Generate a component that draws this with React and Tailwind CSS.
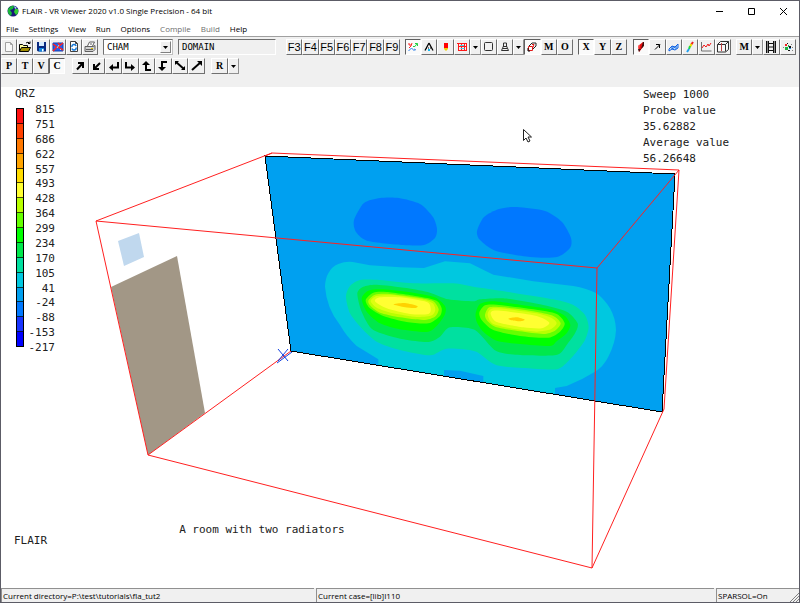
import React, { useState } from 'react';
import clsx from 'clsx';

const MENU = [
  { label: 'File' },
  { label: 'Settings' },
  { label: 'View' },
  { label: 'Run' },
  { label: 'Options' },
  { label: 'Compile', disabled: true },
  { label: 'Build', disabled: true },
  { label: 'Help' },
];

const LEGEND_LABELS = [815, 751, 686, 622, 557, 493, 428, 364, 299, 234, 170, 105, 41, -24, -88, -153, -217];

const LEGEND_COLORS = [
  '#ff1010', '#ff4000', '#ff7800', '#ffa400', '#ffdc00', '#ffff32', '#b8ff00', '#64ff00',
  '#00ff00', '#00e84c', '#00e0a0', '#00c8e0', '#00a0f0', '#0078ff', '#1834ff', '#0000ff',
];

// Contour rings on the result plane, outermost first
const RINGS = [
  {
    color: '#00e0a0',
    points: [[78, 170], [90, 138], [120, 120], [180, 120], [280, 130], [400, 130], [460, 140], [560, 155], [700, 178], [760, 195], [795, 225], [806, 262], [795, 300], [770, 335], [740, 368], [710, 388], [640, 386], [530, 376], [465, 334], [380, 326], [330, 346], [240, 330], [170, 305], [125, 265], [90, 220]],
  },
  {
    color: '#00e84c',
    points: [[112, 160], [130, 140], [170, 134], [260, 144], [330, 158], [385, 178], [460, 184], [480, 178], [550, 175], [660, 193], [740, 215], [773, 250], [765, 280], [740, 315], [712, 344], [620, 346], [530, 334], [465, 270], [390, 262], [360, 290], [325, 306], [250, 298], [160, 270], [125, 215]],
  },
  { color: '#00ff00', points: [[125, 175], [145, 152], [190, 148], [280, 158], [345, 172], [376, 200], [374, 225], [350, 258], [320, 276], [240, 268], [180, 250], [140, 215]] },
  { color: '#00ff00', points: [[467, 220], [480, 192], [520, 184], [600, 194], [690, 208], [735, 228], [751, 255], [740, 280], [710, 304], [690, 318], [600, 312], [530, 302], [490, 275], [470, 245]] },
  { color: '#64ff00', points: [[137, 180], [160, 158], [200, 156], [300, 170], [350, 182], [365, 205], [360, 228], [325, 250], [260, 246], [190, 228], [150, 205]] },
  { color: '#64ff00', points: [[478, 218], [495, 196], [530, 194], [640, 208], [710, 222], [734, 250], [720, 275], [685, 293], [600, 288], [520, 270], [485, 240]] },
  { color: '#b8ff00', points: [[145, 182], [165, 164], [210, 162], [300, 174], [340, 184], [356, 208], [345, 230], [310, 240], [240, 232], [180, 218], [152, 198]] },
  { color: '#b8ff00', points: [[495, 225], [508, 202], [550, 202], [640, 214], [700, 228], [722, 250], [705, 272], [670, 282], [600, 274], [530, 262], [502, 242]] },
  { color: '#dcff10', points: [[152, 183], [170, 168], [220, 166], [310, 179], [338, 190], [346, 208], [336, 226], [290, 231], [220, 220], [170, 203]] },
  { color: '#dcff10', points: [[503, 224], [515, 206], [560, 207], [650, 220], [695, 234], [710, 250], [692, 268], [650, 275], [590, 268], [520, 252]] },
  { color: '#ffff32', points: [[165, 184], [180, 172], [240, 172], [320, 186], [332, 205], [325, 222], [270, 222], [200, 205]] },
  { color: '#ffff32', points: [[512, 222], [520, 212], [560, 214], [650, 228], [688, 248], [665, 265], [610, 262], [530, 246]] },
  { color: '#ffd200', points: [[220, 193], [255, 189], [292, 198], [285, 204], [255, 202]] },
  { color: '#ffd200', points: [[565, 236], [590, 232], [614, 239], [600, 244], [575, 241]] },
];

const COLD_SPOTS = [
  [[354, 220], [364, 203], [380, 198], [399, 198], [420, 204], [433, 217], [437, 229], [435, 238], [424, 245], [403, 245], [368, 241], [356, 232]],
  [[477, 231], [484, 217], [499, 209], [517, 207], [545, 211], [562, 222], [571, 238], [570, 248], [557, 257], [530, 257], [496, 251], [480, 240]],
];

// Closed Catmull-Rom curve through the points
const smooth = (pts) => {
  const n = pts.length;
  const at = (i) => pts[(i + n) % n];
  let d = `M${pts[0]}`;
  for (let i = 0; i < n; i++) {
    const [p0, p1, p2, p3] = [at(i - 1), at(i), at(i + 1), at(i + 2)];
    const c1 = [p1[0] + (p2[0] - p0[0]) / 8, p1[1] + (p2[1] - p0[1]) / 8];
    const c2 = [p2[0] - (p3[0] - p1[0]) / 8, p2[1] - (p3[1] - p1[1]) / 8];
    d += `C${c1} ${c2} ${p2}`;
  }
  return d + 'Z';
};

function Icon({ children, ...props }) {
  return (
    <svg viewBox="0 0 14 14" className="h-3.5 w-3.5 shrink-0" fill="none" stroke="black" aria-hidden="true" {...props}>
      {children}
    </svg>
  );
}

const ICONS = {
  new: (
    <Icon stroke="#a0a0a0"><path d="M3.5 2.5h5l2 2v7h-7zM8.5 2.5v2h2" fill="#f8f8f8" /></Icon>
  ),
  open: (
    <Icon>
      <path d="M1.5 11.5v-7h3l1 1h4v2" fill="#ffffa0" />
      <path d="M1.5 11.5l2-4h9l-2 4z" fill="#a08c00" />
      <path d="M8 3q2-2 4 .5M12 1.500v2h-2" />
    </Icon>
  ),
  save: (
    <Icon stroke="none">
      <path d="M3 2h9v9.500H4l-1-1z" fill="#0a2a80" />
      <path d="M5 2h5v4H5z" fill="#d8ecff" />
      <path d="M5 8h5v3.500H5z" fill="#1488e0" />
      <path d="M8 9h1.500v2.500H8z" fill="white" />
    </Icon>
  ),
  mail: (
    <Icon>
      <path d="M2 3h10v8H2z" fill="#2060f0" stroke="#1040b0" />
      <path d="M2 4l4 3-4 4M12 3L7 7l5 3M7 3l2 2" stroke="#ff2020" strokeWidth="1.5" />
      <path d="M6 8l2-3M9 10l1-1" stroke="#80e0ff" />
    </Icon>
  ),
  refresh: (
    <Icon>
      <path d="M3.500 1.500h5l2 2v8h-7z" fill="white" stroke="#404040" />
      <path d="M8.500 1.500v2h2" stroke="#404040" />
      <path d="M5 7a2 2 0 0 1 4-1M9 7.500a2 2 0 0 1-4 1" stroke="#1478d8" strokeWidth="1.500" />
    </Icon>
  ),
  print: (
    <Icon stroke="#606060">
      <path d="M4.500 6l2-4h5l-2 4" fill="white" />
      <path d="M2 6.500h8l2-1v4l-2 2H2z" fill="#d0d0d0" />
      <path d="M3 9.500h7M7 4h2" />
      <path d="M8 8.500h2" stroke="#d8c000" />
    </Icon>
  ),
  axes: (
    <Icon>
      <path d="M3 3v2h2M6 3l-1 3-2 2" stroke="#ff2020" />
      <path d="M7 6.500h2l2-3M9 3.500h2.500v2.500" stroke="#20d040" />
      <path d="M2.500 11l3-3 3 3M8 9l2 1" stroke="#3080e8" />
    </Icon>
  ),
  view: (
    <Icon>
      <path d="M7 3L3 10.500M7 3l4 7.500" strokeWidth="1.300" />
      <path d="M4 8h6" strokeDasharray="1 1" />
      <path d="M6 10h2" stroke="#10b8f0" strokeWidth="2" />
    </Icon>
  ),
  probe: (
    <Icon stroke="none">
      <path d="M5 3h4v5H5z" fill="#ff0000" />
      <path d="M5 8h4v1l-2 2-2-2z" fill="#f0d000" />
    </Icon>
  ),
  mesh: (
    <Icon stroke="#ff1818">
      <path d="M2 3.500h9M3.500 3v8M11.500 3v8M3 10.500h9" />
      <path d="M6.500 3v8M9.500 4v7M3 6.500h9" />
      <path d="M5 5.500h4M5.500 8.500h4" stroke="#40d0e8" />
    </Icon>
  ),
  box: (
    <Icon stroke="#303030"><rect x="2.500" y="2.500" width="8" height="8" rx="1" /></Icon>
  ),
  wire: (
    <Icon stroke="#303030"><path d="M5.500 3v3l-2 4.500h7l-2-4.500V3zM5 6.500h4M5 8.500h4" /></Icon>
  ),
  object: (
    <Icon>
      <path d="M4 6l3-3h4v3L8 9" stroke="#202020" />
      <path d="M3.500 6.500h4v4h-4zM7 4.500h2l-1 3" stroke="#e01818" />
      <path d="M3 8v3h2" />
    </Icon>
  ),
  contour: (
    <Icon stroke="none">
      <path d="M4 6l5-4v5l-4 5z" fill="#e81010" />
      <path d="M9 2l1 0v4l-3 3zM4 9l1 3 2-3z" fill="#401010" />
      <path d="M4 6l2-1-1 4z" fill="#ff6060" />
    </Icon>
  ),
  vector: (
    <Icon><path d="M5 9.500l5-5M6 4.500h3.500V8" /></Icon>
  ),
  surface: (
    <Icon stroke="#1060e0">
      <path d="M2 9l3-3 3 1 3-3v4l-3 2-3-1-3 2z" fill="#c8e8ff" />
      <path d="M5 6v3M8 7l-3 2M9 6v3" />
    </Icon>
  ),
  stream: (
    <Icon strokeWidth="2">
      <path d="M10 2L8 5" stroke="#f02020" />
      <path d="M8.500 4L7 7" stroke="#f0e000" />
      <path d="M7 6L6 9" stroke="#20d840" />
      <path d="M6 9l-2 3" stroke="#20a0f0" />
    </Icon>
  ),
  chart: (
    <Icon>
      <path d="M2.500 2v9h10" stroke="#707070" />
      <path d="M3 8l2-3 2 2 2-3 1 2 2-3" stroke="#f01818" />
    </Icon>
  ),
  cube: (
    <Icon stroke="#303030">
      <path d="M1.500 4.500l3-3h8v8l-3 2.500h-8zM1.500 4.500h8l3-3M9.500 4.500v7" fill="#f8f8f8" />
      <path d="M5.500 3v8" stroke="#c04040" />
    </Icon>
  ),
  film: (
    <Icon stroke="#101010">
      <path d="M3.500 1v12M10.500 1v12" strokeWidth="3" />
      <path d="M3.500 1.500v11M10.500 1.500v11" stroke="white" strokeDasharray="1 1" />
      <path d="M4 3.500h6M4 7h6M4 10.500h6" />
    </Icon>
  ),
  particles: (
    <Icon stroke="none">
      <path d="M4 4h2v2H4z" fill="#f02020" />
      <path d="M4 7h3v3H4zM7 5h1v2H7z" fill="#20b040" />
      <path d="M6 3h1v1H6zM8 6h2v2H8zM7 10h2v1H7z" fill="#101010" />
      <path d="M2 7h1v1H2zM10 4h1v1h-1zM11 7h1v1h-1zM11 10h1v1h-1z" fill="#808080" />
      <path d="M8 8h2v1H8z" fill="#2090f0" />
    </Icon>
  ),
  upRight: (
    <Icon strokeWidth="2"><path d="M4 10.500L9 5M5 4h5v5" /></Icon>
  ),
  downLeft: (
    <Icon strokeWidth="2"><path d="M10 4L5 9M4 5v5h5" /></Icon>
  ),
  returnLeft: (
    <Icon strokeWidth="2">
      <path d="M11 3v5.500H5" />
      <path d="M6 5v7L2 8.500z" fill="black" stroke="none" />
    </Icon>
  ),
  returnRight: (
    <Icon strokeWidth="2">
      <path d="M3 3v5.500H9" />
      <path d="M8 5v7l4-3.500z" fill="black" stroke="none" />
    </Icon>
  ),
  turnUp: (
    <Icon strokeWidth="2">
      <path d="M11 11H6V5" />
      <path d="M2 6h8L6 2z" fill="black" stroke="none" />
    </Icon>
  ),
  turnDown: (
    <Icon strokeWidth="2">
      <path d="M11 3H6v6" />
      <path d="M2 8h8l-4 4z" fill="black" stroke="none" />
    </Icon>
  ),
  diagDown: (
    <Icon strokeWidth="2">
      <path d="M3 3l8 7" />
      <path d="M2 2h4L2 6zM12 11V7l-4 4z" fill="black" stroke="none" />
    </Icon>
  ),
  diagUp: (
    <Icon strokeWidth="2">
      <path d="M2 11l9-8" />
      <path d="M12 2v5L7 2z" fill="black" stroke="none" />
    </Icon>
  ),
};

function ToolButton({ name, icon, text, pressed = false, sans = false }) {
  return (
    <button
      type="button"
      aria-label={name}
      aria-pressed={pressed}
      className={clsx(
        'flex h-4 flex-1 basis-0 items-center justify-center overflow-hidden border leading-none',
        pressed
          ? 'border-t-[#606060] border-l-[#606060] border-r-white border-b-white bg-[#fafafa]'
          : 'border-t-white border-l-white border-r-[#707070] border-b-[#707070] bg-[#f0f0f0]',
        sans
          ? "font-['Liberation_Sans',sans-serif] text-[11px]"
          : "font-['Liberation_Serif',serif] text-[10px] font-bold"
      )}
    >
      {icon ? ICONS[icon] : text}
    </button>
  );
}

function DropButton({ name }) {
  return (
    <button
      type="button"
      aria-label={name}
      className="flex h-4 w-[11px] shrink-0 items-center justify-center border border-t-white border-l-white border-r-[#909090] border-b-[#909090] bg-[#f0f0f0]"
    >
      <svg viewBox="0 0 5 3" className="h-[3px] w-[5px]" aria-hidden="true"><path d="M0 0h5L2.500 3z" /></svg>
    </button>
  );
}

function Group({ className, children }) {
  return <div className={clsx('flex shrink-0', className)}>{children}</div>;
}

function TitleBar() {
  return (
    <header className="flex h-5 items-center bg-white pl-[6px]">
      <svg viewBox="0 0 12 12" className="h-3 w-3" aria-hidden="true">
        <circle cx="6" cy="6" r="5.500" fill="#181878" />
        <path d="M1 4q3-4 6-3l-1 3-3 1 2 3-1 3Q0 9 1 4z" fill="#18b838" />
        <path d="M8 4l3 0q1 4-2 6L7 7z" fill="#30d030" />
        <path d="M7 1l3 2-2 1z" fill="#b0e8ff" />
      </svg>
      <h1 className="ml-[3px] text-[8px] whitespace-nowrap">FLAIR - VR Viewer 2020 v1.0 Single Precision - 64 bit</h1>
      <div className="ml-auto flex">
        <button type="button" aria-label="Minimize" className="flex h-5 w-8 items-center justify-center">
          <svg viewBox="0 0 9 9" className="h-[9px] w-[9px]" stroke="black"><path d="M1 4.500h7" /></svg>
        </button>
        <button type="button" aria-label="Maximize" className="flex h-5 w-8 items-center justify-center">
          <svg viewBox="0 0 9 9" className="h-[9px] w-[9px]" stroke="black" fill="none"><path d="M1.500 1.500h6v6h-6z" /></svg>
        </button>
        <button type="button" aria-label="Close" className="flex h-5 w-8 items-center justify-center">
          <svg viewBox="0 0 9 9" className="h-[9px] w-[9px]" stroke="black"><path d="M1 1l7 7M8 1L1 8" /></svg>
        </button>
      </div>
    </header>
  );
}

function MenuBar() {
  return (
    <nav className="flex h-4 items-center gap-[10px] border-b border-[#a0a0a0] bg-white pl-[5px]">
      {MENU.map(item => (
        <button
          key={item.label}
          type="button"
          disabled={item.disabled}
          className={clsx('text-[8px] leading-none', item.disabled && 'text-[#6d6d6d]')}
        >
          {item.label}
        </button>
      ))}
    </nav>
  );
}

function Toolbars() {
  const [style, setStyle] = useState('CHAM');

  return (
    <div className="flex h-[50px] flex-col gap-[3px] overflow-hidden bg-[#f0f0f0] pt-[2px]">
      <div className="flex">
        <Group className="w-[97px]">
          <ToolButton name="New" icon="new" />
          <ToolButton name="Open" icon="open" />
          <ToolButton name="Save" icon="save" />
          <ToolButton name="Send" icon="mail" />
          <ToolButton name="Reload" icon="refresh" />
          <ToolButton name="Print" icon="print" />
        </Group>
        <div className="relative ml-[5px] h-4 w-[70px] shrink-0">
          <select
            aria-label="Style"
            value={style}
            onChange={e => setStyle(e.target.value)}
            className="block h-4 w-full appearance-none border border-t-[#707070] border-l-[#707070] border-r-[#c0c0c0] border-b-[#c0c0c0] bg-white pl-[3px] font-['DejaVu_Sans_Mono',monospace] text-[9px] leading-none"
          >
            <option>CHAM</option>
          </select>
          <span className="pointer-events-none absolute top-[2px] right-[2px] flex h-3 w-[11px] items-center justify-center border border-t-white border-l-white border-r-[#808080] border-b-[#808080] bg-[#f0f0f0]">
            <svg viewBox="0 0 5 3" className="h-[3px] w-[5px]" aria-hidden="true"><path d="M0 0h5L2.500 3z" /></svg>
          </span>
        </div>
        <input
          aria-label="Selected object"
          readOnly
          value="DOMAIN"
          className="ml-[5px] h-4 w-[98px] shrink-0 border border-t-[#707070] border-l-[#707070] border-r-white border-b-white bg-[#f0f0f0] pl-[3px] font-['DejaVu_Sans_Mono',monospace] text-[9px] leading-none"
        />
        <Group className="ml-[10px] w-[114px]">
          {['F3', 'F4', 'F5', 'F6', 'F7', 'F8', 'F9'].map(key => (
            <ToolButton key={key} name={key} text={key} sans />
          ))}
        </Group>
        <Group className="ml-[5px] w-[168px]">
          <ToolButton name="Axes" icon="axes" pressed />
          <ToolButton name="View direction" icon="view" />
          <ToolButton name="Probe" icon="probe" />
          <ToolButton name="Mesh" icon="mesh" />
          <DropButton name="Mesh options" />
          <ToolButton name="Domain box" icon="box" />
          <ToolButton name="Wireframe" icon="wire" />
          <DropButton name="Wireframe options" />
          <ToolButton name="Objects" icon="object" pressed />
          <ToolButton name="Move" text="M" />
          <ToolButton name="Object list" text="O" />
        </Group>
        <Group className="ml-[5px] w-[49px]">
          <ToolButton name="X plane" text="X" pressed />
          <ToolButton name="Y plane" text="Y" />
          <ToolButton name="Z plane" text="Z" />
        </Group>
        <Group className="ml-[6px] w-[98px]">
          <ToolButton name="Contours" icon="contour" pressed />
          <ToolButton name="Vectors" icon="vector" />
          <ToolButton name="Iso-surface" icon="surface" />
          <ToolButton name="Streamlines" icon="stream" />
          <ToolButton name="Profile" icon="chart" />
          <ToolButton name="Slice" icon="cube" />
        </Group>
        <Group className="ml-[5px] w-[60px]">
          <ToolButton name="Macro" text="M" />
          <DropButton name="Macro options" />
          <ToolButton name="Animate" icon="film" />
          <ToolButton name="Particles" icon="particles" />
        </Group>
      </div>

      <div className="flex">
        <Group className="w-16">
          <ToolButton name="Pressure" text="P" />
          <ToolButton name="Temperature" text="T" />
          <ToolButton name="Velocity" text="V" />
          <ToolButton name="Current variable" text="C" pressed />
        </Group>
        <Group className="ml-[7px] w-[133px]">
          <ToolButton name="Zoom in" icon="upRight" />
          <ToolButton name="Zoom out" icon="downLeft" />
          <ToolButton name="Turn left" icon="returnLeft" />
          <ToolButton name="Turn right" icon="returnRight" />
          <ToolButton name="Tilt up" icon="turnUp" />
          <ToolButton name="Tilt down" icon="turnDown" />
          <ToolButton name="Roll left" icon="diagDown" />
          <ToolButton name="Roll right" icon="diagUp" />
        </Group>
        <Group className="ml-[6px] w-7">
          <ToolButton name="Reset" text="R" />
          <DropButton name="Reset options" />
        </Group>
      </div>
    </div>
  );
}

function Scene() {
  return (
    <svg viewBox="1 87 798 501" className="absolute inset-0 h-full w-full" fill="none" role="img" aria-label="A room with two radiators">
      {/* Door and vent */}
      <path d="M111 287L177 256 205 413 148 455z" fill="#a29786" />
      <path d="M118 241L139 233 144 257 124 266z" fill="#c0d8ee" />

      {/* Result plane */}
      <path d="M265 156L675 174 662 412 291 351z" fill="#00a0f0" />
      {COLD_SPOTS.map((pts, i) => (
        <path key={i} d={smooth(pts)} fill="#0078ff" />
      ))}
      <g transform="translate(320 240) scale(0.33333)">
        <path
          fill="#00c8e0"
          d="M15 140Q16 115 25 100Q35 80 55 72Q75 64 98 66L150 76 240 82 312 84 375 64 450 70 520 104 640 124 760 138Q800 145 830 160Q855 180 870 205Q887 235 888 270Q886 310 865 350Q850 380 825 395Q785 420 740 438L705 444V461L490 427V408L420 392 372 390V407L175 375V358L110 318Q80 290 60 255Q20 205 15 140z"
        />
        {RINGS.map((ring, i) => (
          <path key={i} d={smooth(ring.points)} fill={ring.color} />
        ))}
      </g>
      <path d="M265 156L675 174 662 412 291 351z" stroke="black" shapeRendering="crispEdges" />

      {/* Domain box */}
      <g stroke="#ff2020">
        <path d="M96 221L597 268 592 568 148 455z" />
        <path d="M96 221L272 153 679 170 664 409 592 568M679 170L597 268M148 455L291 351M265 156l7-3" />
      </g>

      {/* Probe marker */}
      <path d="M278 349l10 12M288 349l-10 12M277 363l15-11" stroke="#1040e0" />

      {/* Pointer */}
      <path d="M523.500 129.500v11l2.500-2.500 2 4 2-1-2-4h3.500z" fill="white" stroke="#202020" />
    </svg>
  );
}

function Legend() {
  return (
    <div className="relative w-[54px] pl-[14px]">
      <div>QRZ</div>
      <div className="mt-[2px] flex">
        <div className="mt-[5px] ml-px flex h-[239px] w-2 shrink-0 flex-col border border-black">
          {LEGEND_COLORS.map(color => (
            <div key={color} className="flex-1 border-b border-black/70 last:border-b-0" style={{ backgroundColor: color }} />
          ))}
        </div>
        <ul className="flex h-[252px] flex-1 flex-col items-end justify-between">
          {LEGEND_LABELS.map(label => (
            <li key={label}>{label}</li>
          ))}
        </ul>
      </div>
    </div>
  );
}

function Viewport() {
  return (
    <main className="relative flex min-h-0 flex-1 flex-col justify-between bg-white font-['DejaVu_Sans_Mono',monospace] text-[11px] leading-[14px] text-[#202020]">
      <Scene />
      <div className="relative flex justify-between">
        <Legend />
        <dl className="mr-[70px] leading-4">
          <dt>Sweep 1000</dt>
          <dt>Probe value</dt>
          <dd>35.62882</dd>
          <dt>Average value</dt>
          <dd>56.26648</dd>
        </dl>
      </div>
      <div className="relative flex items-start pb-10 pl-[13px]">
        <span className="pt-[11px]">FLAIR</span>
        <span className="ml-[132px]">A room with two radiators</span>
      </div>
    </main>
  );
}

function StatusBar() {
  const pane = 'overflow-hidden border-t border-l border-t-[#909090] border-l-[#909090] pl-px whitespace-nowrap';
  return (
    <footer className="flex h-[14px] gap-[2px] bg-[#f0f0f0] text-[8px] leading-[13px]">
      <div className={clsx(pane, 'w-[313px]')}>Current directory=P:\test\tutorials\fla_tut2</div>
      <div className={clsx(pane, 'flex-1')}>Current case=[lib]I110</div>
      <div className={clsx(pane, 'flex w-[83px] items-end justify-between')}>
        <span>SPARSOL=On</span>
        <svg viewBox="0 0 9 9" className="h-[9px] w-[9px]" stroke="#808080" aria-hidden="true">
          <path d="M0 9l9-9M3 9l6-6M6 9l3-3" />
        </svg>
      </div>
    </footer>
  );
}

export default function App() {
  return (
    <div className="flex h-screen flex-col overflow-hidden border border-[#5c5c66] bg-white font-['Open_Sans',sans-serif] text-black">
      <TitleBar />
      <MenuBar />
      <Toolbars />
      <Viewport />
      <StatusBar />
    </div>
  );
}
